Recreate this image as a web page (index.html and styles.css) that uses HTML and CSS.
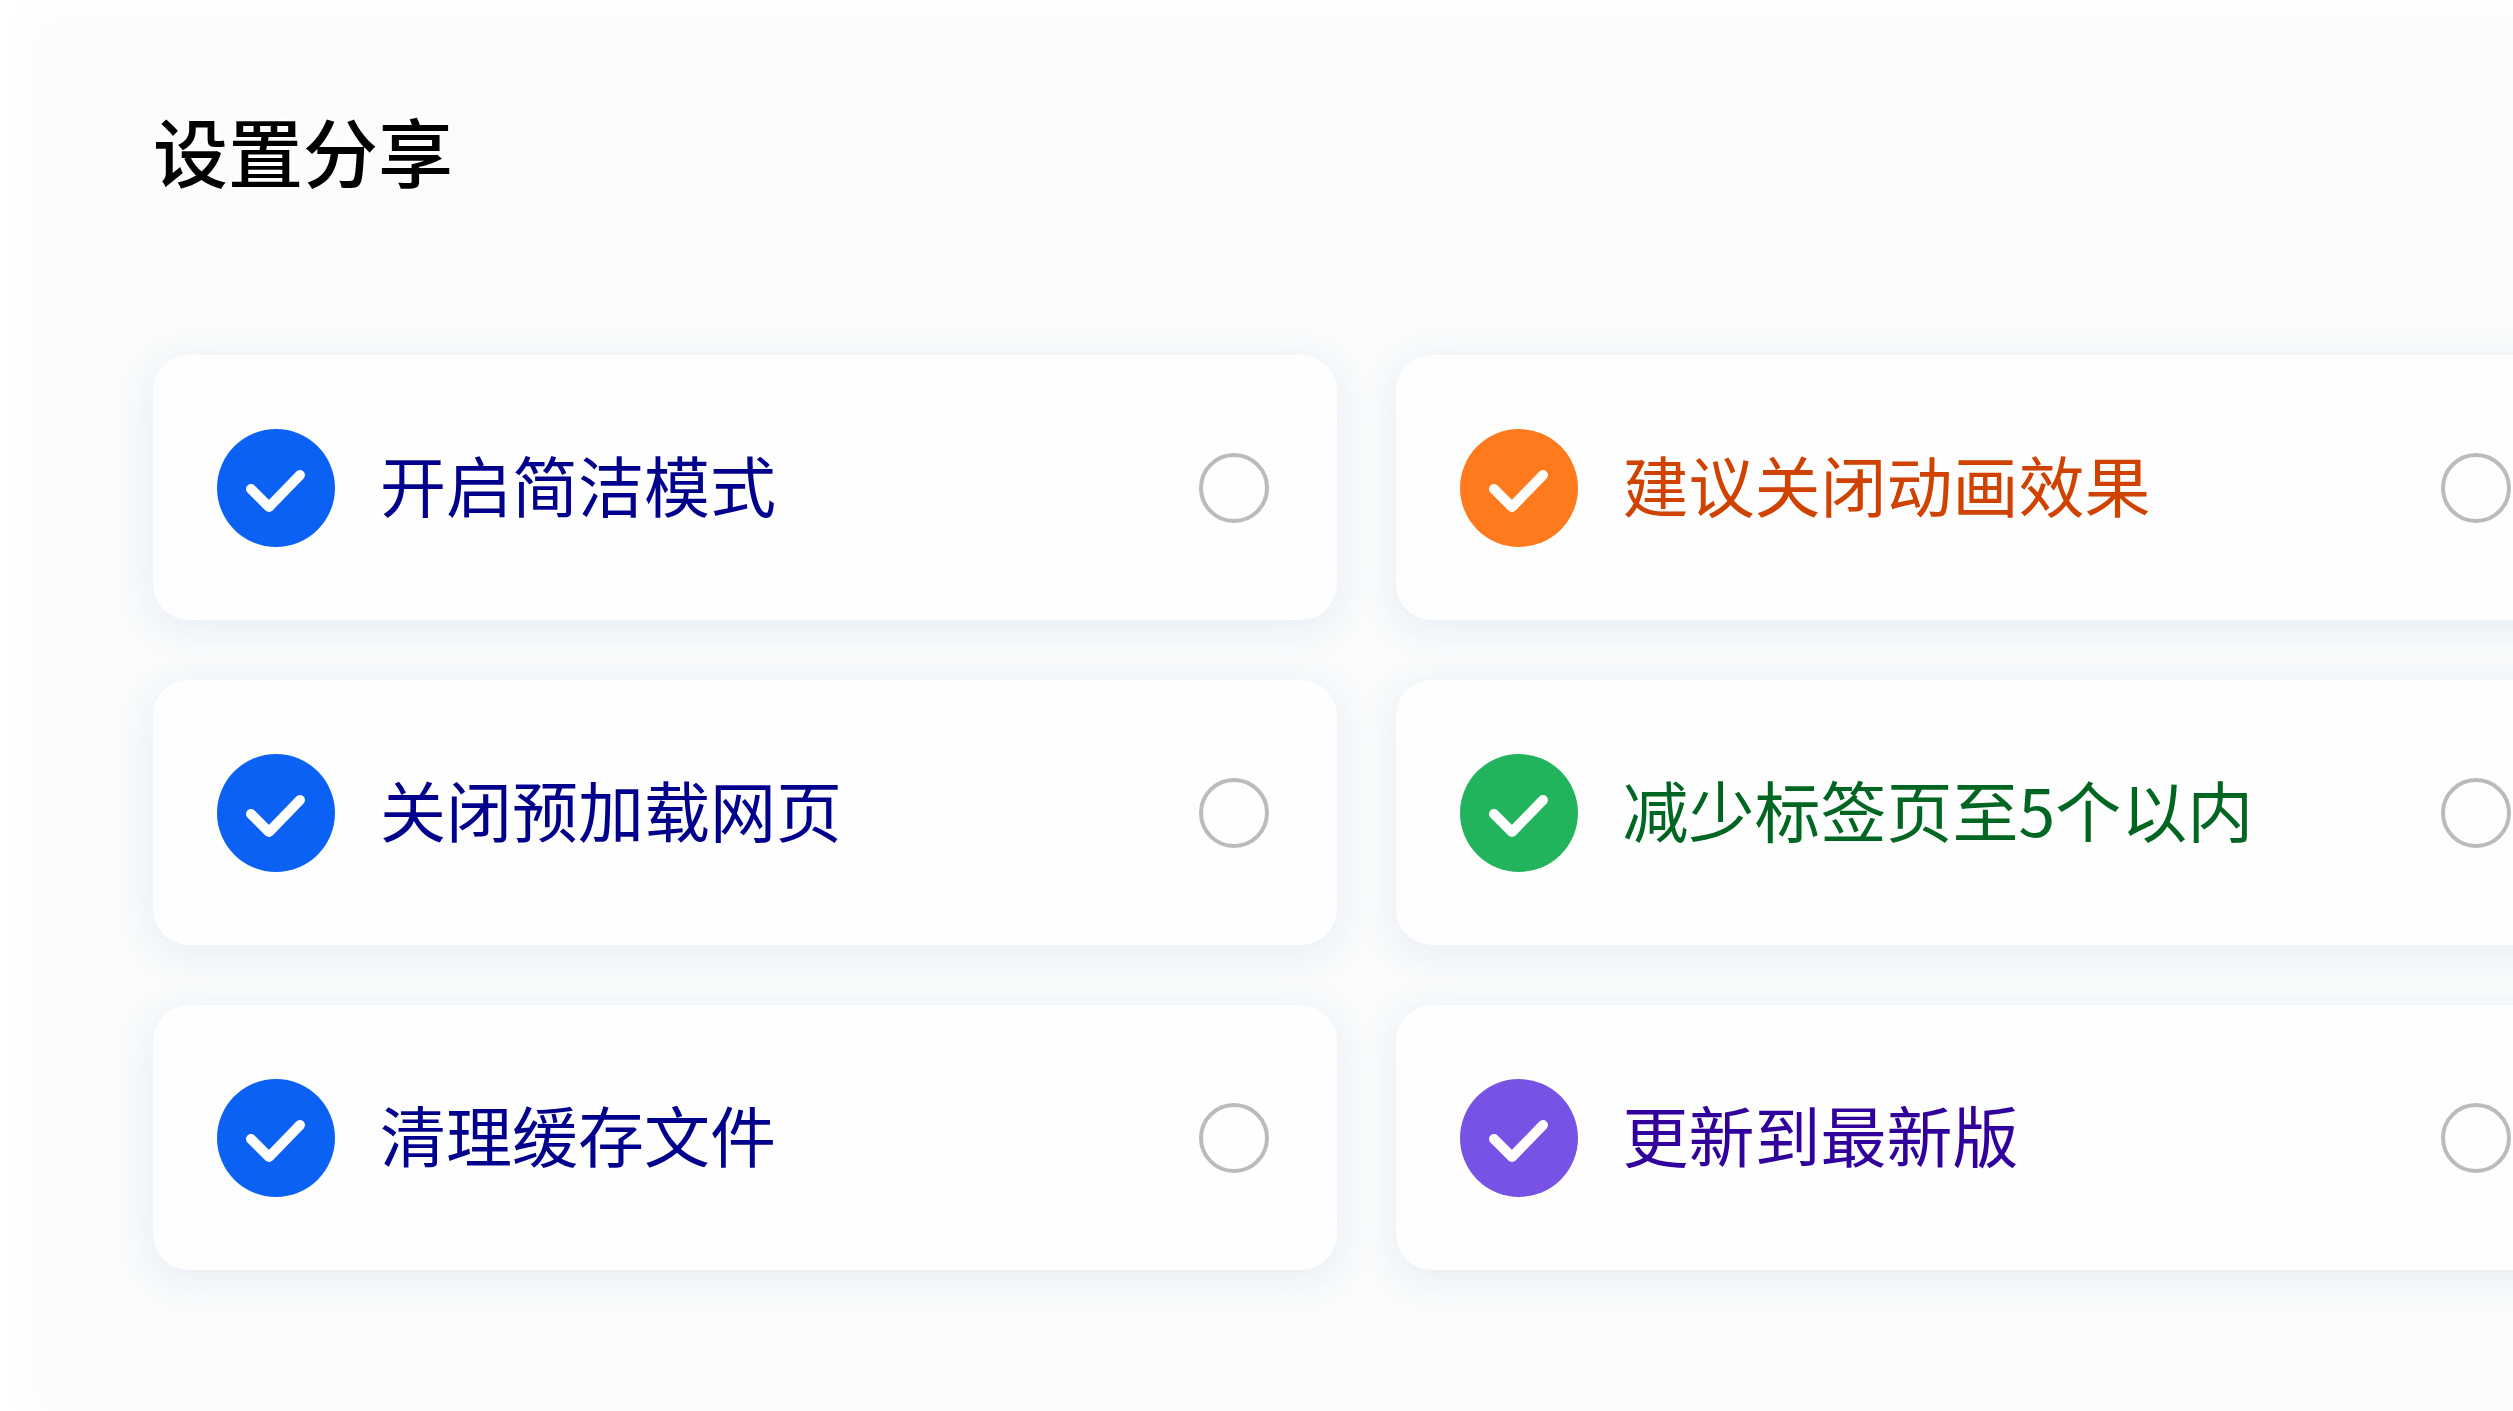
FILE: index.html
```html
<!DOCTYPE html>
<html lang="zh-CN">
<head>
    <meta charset="UTF-8">
    <meta name="viewport" content="width=device-width, initial-scale=1.0">
    <title>设置分享</title>
    <link rel="stylesheet" href="styles.css">
</head>
<body>
    <svg class="sprite" aria-hidden="true">
        <symbol id="check" viewBox="0 0 118 118">
            <path d="M34 60 L52 78 L83 46" fill="none" stroke="#fff" stroke-width="10" stroke-linecap="round" stroke-linejoin="round"/>
        </symbol>
    </svg>
    <main class="page">
        <h1>设置分享</h1>
        <div class="cards">
            <label class="card blue">
                <svg class="icon"><use href="#check"/></svg>
                <span class="text">开启简洁模式</span>
                <input type="checkbox" name="simple">
            </label>
            <label class="card orange">
                <svg class="icon"><use href="#check"/></svg>
                <span class="text">建议关闭动画效果</span>
                <input type="checkbox" name="animation">
            </label>
            <label class="card blue">
                <svg class="icon"><use href="#check"/></svg>
                <span class="text">关闭预加载网页</span>
                <input type="checkbox" name="preload">
            </label>
            <label class="card green">
                <svg class="icon"><use href="#check"/></svg>
                <span class="text">减少标签页至5个以内</span>
                <input type="checkbox" name="tabs">
            </label>
            <label class="card blue">
                <svg class="icon"><use href="#check"/></svg>
                <span class="text">清理缓存文件</span>
                <input type="checkbox" name="cache">
            </label>
            <label class="card purple">
                <svg class="icon"><use href="#check"/></svg>
                <span class="text">更新到最新版</span>
                <input type="checkbox" name="update">
            </label>
        </div>
    </main>
</body>
</html>
```
FILE: styles.css
```css
* {
	margin: 0;
	padding: 0;
	box-sizing: border-box;
}
body {
	min-height: 100vh;
	overflow: hidden;
	background-color: #f9fbfc;
	box-shadow: inset 30px 12px 50px #fff;
	font-family: "Noto Sans CJK SC", sans-serif;
}
.sprite {
	display: none;
}
/* the second column runs past the right edge */
.page {
	margin-right: -66px;
	padding: 94px 0 100px 153px;
}
h1 {
	margin-bottom: 149px;
	color: #000;
	font-size: 75px;
	font-weight: 500;
	line-height: 112px;
	text-shadow: 0 0 16px #fff, 0 0 30px #fff, 0 0 40px #fff;
}
.cards {
	display: grid;
	grid-template-columns: repeat(2, 1fr);
	gap: 60px 59px;
}
.card {
	display: flex;
	align-items: center;
	height: 265px;
	padding: 0 68px 0 64px;
	border-radius: 36px;
	background-color: #fefefe;
	box-shadow: 0 8px 36px rgba(80, 120, 180, 0.1);
	cursor: pointer;
}
.icon {
	flex: none;
	width: 118px;
	height: 118px;
	margin-right: 45px;
	border-radius: 50%;
}
.text {
	flex: 1;
	padding-bottom: 10px;
	font-size: 66px;
	line-height: 96px;
	white-space: nowrap;
}
.blue .icon {
	background-color: #0c61f5;
}
.blue .text {
	color: #00008c;
}
.orange .icon {
	background-color: #ff7a1c;
}
.orange .text {
	color: #d04200;
}
.green .icon {
	background-color: #22b45c;
}
.green .text {
	color: #006622;
}
.purple .icon {
	background-color: #7852e4;
}
.purple .text {
	color: #31009c;
}
input {
	appearance: none;
	flex: none;
	width: 70px;
	height: 70px;
	border: 4px solid #bbb;
	border-radius: 50%;
	cursor: pointer;
}
input:checked {
	border-color: #0c61f5;
	background-color: #0c61f5;
}
```
